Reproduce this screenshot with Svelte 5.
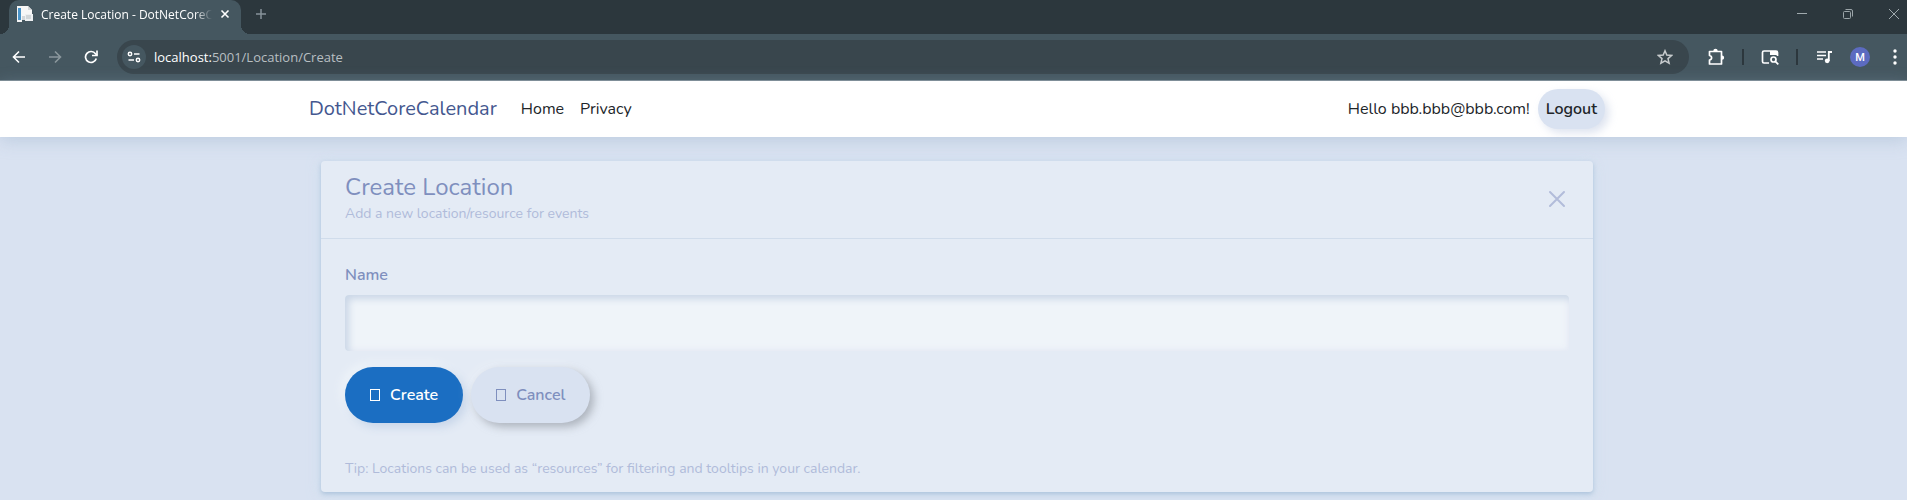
<script>
  let name = $state('');
</script>

<div class="browser">
  <div class="tabs">
    <div class="tab">
      <svg class="favicon" viewBox="0 0 16 16" width="16" height="16" aria-hidden="true">
        <path fill="#f3f4f5" d="M0 0h5v16H0z" /><path fill="#4a94c9" d="M1 2h3v12H1z" />
        <path fill="#f7f7f7" d="M4 0h7l4 4v10H4z" /><path fill="#d3d7da" d="M11 0v4h4zM5 10h4v4H5z" />
        <path fill="#edf0f2" d="M8 8h8v7H8z" /><path stroke="#b7bdc1" d="M9 10h5M9 12h5" />
      </svg>
      <span class="tab-title">Create Location - DotNetCoreCalendar</span>
      <button class="icon" aria-label="Close tab">
        <svg viewBox="0 0 10 10" width="10" height="10"><path d="m1.5 1.5 7 7m0-7-7 7" stroke="#fff" stroke-width="1.6" /></svg>
      </button>
    </div>
    <button class="icon new-tab" aria-label="New tab">
      <svg viewBox="0 0 12 12" width="12" height="12"><path d="M6 1v10M1 6h10" stroke="#87939a" stroke-width="1.5" /></svg>
    </button>
    <div class="window-controls">
      <button class="icon" aria-label="Minimize"><svg viewBox="0 0 12 12" width="12" height="12"><path d="M1 5.5h10" stroke="#a0aaae" /></svg></button>
      <button class="icon" aria-label="Restore"><svg viewBox="0 0 12 12" width="12" height="12" fill="none" stroke="#9ba5a9"><rect x="1.5" y="3.5" width="7" height="7" rx="1" /><path d="M3.500 1.500H9q1.500 0 1.500 1.500v5.500" /></svg></button>
      <button class="icon" aria-label="Close window"><svg viewBox="0 0 12 12" width="12" height="12"><path d="m1 1 10 10M11 1 1 11" stroke="#a0aaae" /></svg></button>
    </div>
  </div>
  <div class="toolbar">
    <div class="history">
      <button class="icon" aria-label="Back"><svg viewBox="0 0 14 14" width="14" height="14" fill="none" stroke="#fff" stroke-width="1.6"><path d="M13 7H2M7 1.500 1.500 7 7 12.500" /></svg></button>
      <button class="icon" aria-label="Forward"><svg viewBox="0 0 14 14" width="14" height="14" fill="none" stroke="#8b979d" stroke-width="1.6"><path d="M1 7h11M7 1.500 12.500 7 7 12.500" /></svg></button>
      <button class="icon" aria-label="Reload"><svg viewBox="0 0 14 14" width="14" height="14" fill="none" stroke="#fff" stroke-width="1.700"><path d="M12.300 8.500A5.500 5.500 0 1 1 11.500 3.800L13 5.300" /><path d="M13 .5v5H8" /></svg></button>
    </div>
    <div class="address">
      <button class="icon site" aria-label="Site information"><svg viewBox="0 0 14 12" width="14" height="12" fill="none" stroke="#fff" stroke-width="1.500"><circle cx="3" cy="3" r="1.700" /><path d="M7 3h5.500M1.500 9H7" /><circle cx="11" cy="9" r="1.700" /></svg></button>
      <span class="url"><b>localhost:</b>5001/Location/Create</span>
      <button class="icon" aria-label="Bookmark"><svg viewBox="0 0 16 16" width="16" height="16" fill="none" stroke="#c7cbcd" stroke-width="1.500"><path d="m8 1.800 1.800 4.300 4.700.4-3.500 3.100 1.100 4.600L8 11.800l-4.100 2.400L5 9.600 1.500 6.500l4.700-.4z" /></svg></button>
    </div>
    <div class="actions">
      <button class="icon" aria-label="Extensions"><svg viewBox="0 0 18 18" width="18" height="18"><path d="M2.500 3.500h12V16h-12v-4c2.800-.5 2.800-4 0-4.500z" fill="none" stroke="#fff" stroke-width="1.700" stroke-linejoin="round" /><path fill="#fff" d="M6.300 3a2.200 2.200 0 0 1 4.400 0zM15 7.500a2 2 0 0 1 0 4.300z" /></svg></button>
      <span class="divider"></span>
      <button class="icon" aria-label="Search with Lens"><svg viewBox="0 0 18 18" width="18" height="18" fill="none" stroke="#fff" stroke-width="1.700"><path d="M8 15H3q-1.500 0-1.500-1.500v-9Q1.500 3 3 3h12q1.500 0 1.500 1.500V8" /><path fill="#fff" stroke="none" d="M9 3h7.500v4H9z" /><circle cx="12.500" cy="11.500" r="2.500" /><path d="m14.300 13.300 3 3" /></svg></button>
      <span class="divider"></span>
      <button class="icon" aria-label="Media controls"><svg viewBox="0 0 18 16" width="18" height="16"><path d="M2 3h9M2 6.500h9M2 10h6" stroke="#fff" stroke-width="1.700" /><path d="M13.800 12V3H17" stroke="#fff" stroke-width="1.800" fill="none" /><circle cx="12.200" cy="11.800" r="2.400" fill="#fff" /></svg></button>
      <button class="icon avatar" aria-label="Profile">M</button>
      <button class="icon" aria-label="Menu"><svg viewBox="0 0 4 16" width="4" height="16" fill="#fff"><circle cx="2" cy="2" r="1.700" /><circle cx="2" cy="8" r="1.700" /><circle cx="2" cy="14" r="1.700" /></svg></button>
    </div>
  </div>
</div>

<div class="page">
  <header class="navbar">
    <nav class="container">
      <a class="brand" href="#home">DotNetCoreCalendar</a>
      <a href="#home">Home</a>
      <a href="#privacy">Privacy</a>
      <a class="hello" href="#account">Hello bbb.bbb@bbb.com!</a>
      <button class="logout">Logout</button>
    </nav>
  </header>
  <main>
    <div class="container">
      <section class="card">
        <div class="card-header">
          <div>
            <h1>Create Location</h1>
            <p>Add a new location/resource for events</p>
          </div>
          <button class="icon" aria-label="Close"><svg viewBox="0 0 18 18" width="18" height="18"><path d="m2 2 14 14M16 2 2 16" stroke="#b2bcda" stroke-width="2" stroke-linecap="round" /></svg></button>
        </div>
        <form onsubmit={(event) => event.preventDefault()}>
          <label for="name">Name</label>
          <input id="name" type="text" bind:value={name} />
          <div class="buttons">
            <button class="pill primary" type="submit"><span class="glyph"></span>Create</button>
            <button class="pill" type="button"><span class="glyph"></span>Cancel</button>
          </div>
          <p class="tip">Tip: Locations can be used as “resources” for filtering and tooltips in your calendar.</p>
        </form>
      </section>
    </div>
  </main>
</div>

<style>
  :global(body) { margin: 0; background: #d9e2f1; }
  * { box-sizing: border-box; }
  button { border: 0; padding: 0; background: none; font: inherit; color: inherit; }
  svg { display: block; }
  a { color: #212529; text-decoration: none; }
  .icon { display: grid; place-items: center; flex: none; }

  .browser { font-family: "Segoe UI", "Open Sans", sans-serif; font-size: 12px; color: #fff; }
  .tabs { display: flex; align-items: center; height: 34px; padding: 0 7px 0 9px; background: #2c373d; }
  .tab { position: relative; display: flex; align-items: center; gap: 8px; width: 232px; height: 34px; padding: 0 11px 6px 8px; border-radius: 10px 10px 0 0; background: #455760; }
  .tab::before, .tab::after { content: ""; position: absolute; bottom: 0; width: 9px; height: 9px; }
  .tab::before { left: -9px; background: radial-gradient(circle at 0 0, #2c373d 9px, #455760 9px); }
  .tab::after { right: -9px; background: radial-gradient(circle at 100% 0, #2c373d 9px, #455760 9px); }
  .favicon { flex: none; }
  .tab-title { flex: 1; overflow: hidden; white-space: nowrap; mask-image: linear-gradient(90deg, #000 90%, transparent); }
  .new-tab { margin: 0 0 6px 14px; }
  .window-controls { display: flex; gap: 34px; margin-left: auto; padding-bottom: 6px; }
  .toolbar { display: flex; align-items: center; height: 47px; background: #455760; border-bottom: 1px solid #7c8a91; }
  .history { display: flex; gap: 22px; padding: 0 19px 0 12px; }
  .address { display: flex; flex: 1; align-items: center; height: 34px; padding: 0 16px 0 5px; border-radius: 17px; background: #39464d; }
  .site { width: 24px; height: 24px; border-radius: 50%; background: #455760; }
  .url { flex: 1; padding-left: 8px; font-size: 13px; color: #b8bfc2; }
  .url b { font-weight: 400; color: #fff; }
  .actions { display: flex; align-items: center; gap: 17px; padding: 0 10px 0 18px; }
  .divider { width: 2px; height: 16px; background: #2c373d; }
  .avatar { width: 20px; height: 20px; border-radius: 50%; background: #5c6bc0; font: 500 11px Roboto, sans-serif; }
  .actions .avatar { margin-right: 6px; }

  .page { font-family: Nunito, "Noto Sans", sans-serif; font-size: 16px; line-height: 24px; color: #7f8fbe; }
  .container { max-width: 1320px; margin: 0 auto; padding: 0 12px; }
  .navbar { position: relative; padding-left: 7px; background: #fff; box-shadow: 0 4px 16px rgba(150, 175, 200, 0.4); }
  nav { display: flex; align-items: center; gap: 16px; height: 56px; white-space: nowrap; }
  .brand { margin-right: 8px; font-size: 20px; color: #44578f; }
  .hello { margin-left: auto; margin-right: -8px; }
  .logout { height: 40px; padding: 0 8px; border-radius: 20px; background: #d9e2f1; box-shadow: 4px 4px 8px rgba(170, 185, 215, 0.4); font-weight: 600; color: #212529; }
  main { padding: 24px 0 8px 7px; }
  .card { margin: 0 12px; border-radius: 4px; background: #e4ebf5; box-shadow: 0 2px 4px rgba(135, 165, 200, 0.5), 0 2px 14px rgba(200, 225, 240, 0.6); }
  .card-header { display: flex; align-items: center; justify-content: space-between; height: 78px; padding: 0 27px 2px 24px; border-bottom: 1px solid #d0dceb; }
  h1 { margin: 0; font-size: 24px; font-weight: 400; line-height: 30px; }
  p { margin: 0; font-size: 14px; line-height: 24px; color: #b0bbda; }
  form { padding: 24px 24px 11px; }
  label { display: block; margin-bottom: 8px; font-weight: 600; }
  input { display: block; width: 100%; height: 56px; padding: 0 16px; border: 0; border-radius: 4px; background: #eff4f9; box-shadow: inset 4px 4px 7px #cbd7e7, inset -2px -2px 6px #e8edf6; font: inherit; color: #44578f; outline: 0; }
  .buttons { display: flex; gap: 8px; margin: 16px 0 34px; }
  .pill { display: flex; align-items: center; justify-content: center; gap: 10px; height: 56px; padding: 0 25px; border-radius: 28px; background: #d9e2f1; box-shadow: 4px 4px 8px rgba(145, 150, 160, 0.65), -4px -4px 12px rgba(255, 255, 255, 0.2); font-weight: 600; }
  .primary { background: #1b6ec2; color: #fff; box-shadow: 4px 4px 10px #c7d5e9, -4px -4px 10px #eff4f9; }
  .glyph { width: 10px; height: 12px; border: 1px solid currentColor; }
</style>
